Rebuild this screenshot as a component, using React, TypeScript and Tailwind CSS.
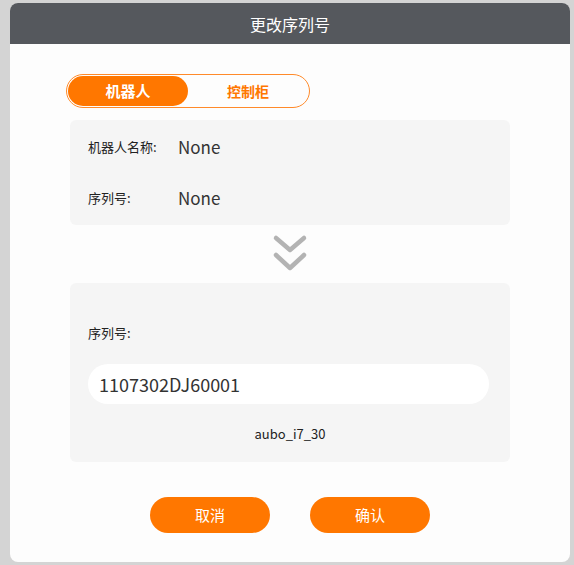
import React from 'react';

const font = { fontFamily: '"Noto Sans CJK SC", "Noto Sans", sans-serif' };

export default function App() {
  return (
    <div className="w-[574px] h-[565px] bg-[#d4d4d4] pt-[3px] pl-[10px]" style={font}>
      <div className="w-[560px] h-[559px] bg-[#fdfdfd] rounded-[8px] overflow-hidden flex flex-col">
        {/* Header */}
        <div className="h-[41px] bg-[#55585d] flex items-center justify-center text-white text-[16px]">
          更改序列号
        </div>

        {/* Tabs */}
        <div className="mt-[30px] ml-[56px] w-[244px] h-[34px] border border-[#ff8a2a] rounded-full p-[1px] flex">
          <div className="w-[120px] h-[30px] rounded-full bg-[#ff7700] text-white font-bold text-[15px] flex items-center justify-center">
            机器人
          </div>
          <div className="w-[120px] h-[30px] text-[#ff7700] font-bold text-[14px] flex items-center justify-center">
            控制柜
          </div>
        </div>

        {/* Current info */}
        <div className="mt-[12px] ml-[60px] w-[440px] bg-[#f5f5f5] rounded-[6px] px-[18px] py-[10px] flex flex-col gap-[17px]">
          <div className="h-[34px] flex items-center">
            <span className="w-[90px] text-[13px] text-[#222]">机器人名称:</span>
            <span className="text-[17px] text-[#333]">None</span>
          </div>
          <div className="h-[34px] flex items-center">
            <span className="w-[90px] text-[13px] text-[#222]">序列号:</span>
            <span className="text-[17px] text-[#333]">None</span>
          </div>
        </div>

        {/* Arrow */}
        <div className="ml-[60px] w-[440px] h-[58px] flex items-center justify-center">
          <svg width="36" height="40" viewBox="0 0 36 40" fill="none" stroke="#b3b3b3" strokeWidth="4.5" strokeLinecap="round" strokeLinejoin="round">
            <path d="M4 4 L18 16 L32 4" />
            <path d="M4 21 L18 34 L32 21" />
          </svg>
        </div>

        {/* New serial */}
        <div className="ml-[60px] w-[440px] bg-[#f5f5f5] rounded-[6px] pt-[40px] pb-[18px] flex flex-col">
          <div className="h-[20px] pl-[18px] flex items-center text-[13px] text-[#222]">序列号:</div>
          <div className="mt-[21px] ml-[18px] w-[401px] h-[40px] bg-white rounded-full pl-[11px] flex items-center text-[18px] text-[#333]">
            1107302DJ60001
          </div>
          <div className="mt-[20px] h-[20px] flex items-center justify-center text-[13px] text-[#222]">
            aubo_i7_30
          </div>
        </div>

        {/* Buttons */}
        <div className="mt-[35px] flex justify-center gap-[40px]">
          <button className="w-[120px] h-[36px] rounded-full bg-[#ff7700] text-white text-[15px]">取消</button>
          <button className="w-[120px] h-[36px] rounded-full bg-[#ff7700] text-white text-[15px]">确认</button>
        </div>
      </div>
    </div>
  );
}
